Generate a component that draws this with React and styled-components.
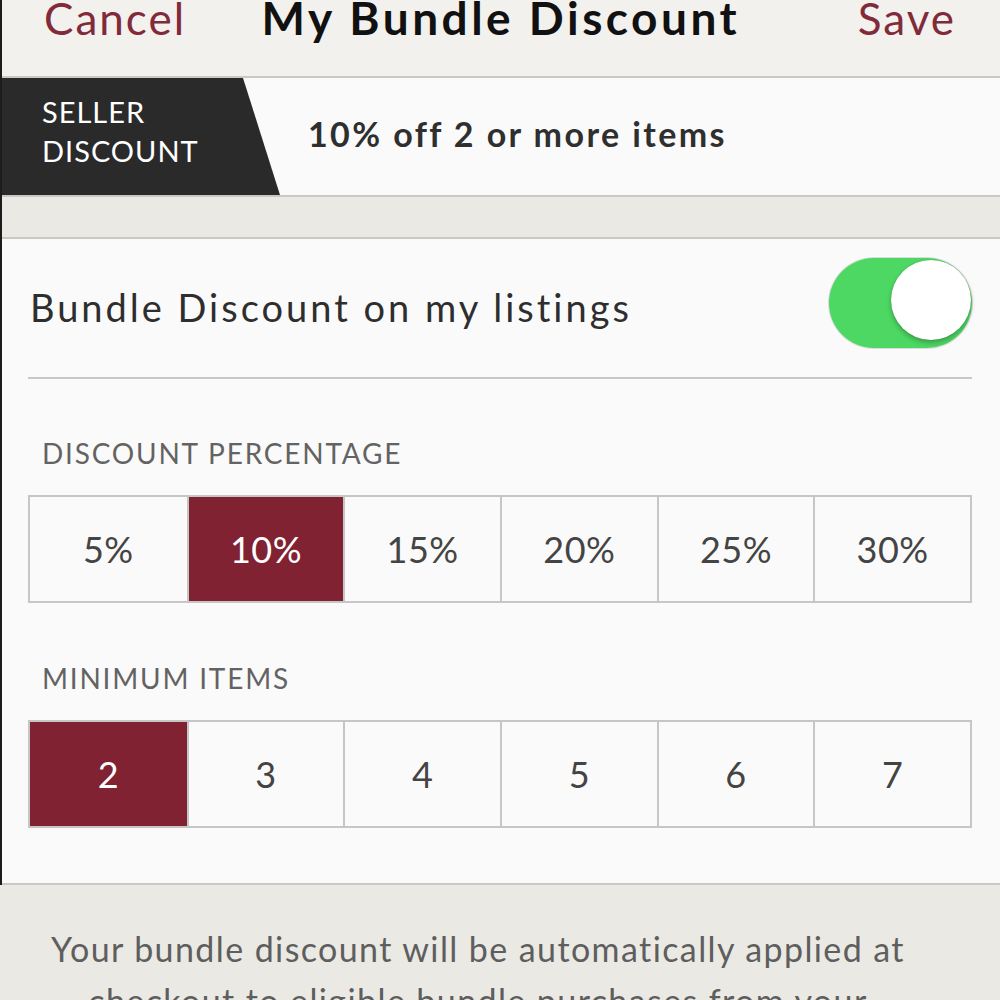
import styled, { createGlobalStyle } from 'styled-components';

const GlobalStyle = createGlobalStyle`
  html, body {
    margin: 0;
    padding: 0;
    background: #ebe9e4;
  }
  body {
    font-family: Lato, 'Noto Sans', sans-serif;
    color: #333;
    overflow: hidden;
  }
`;

const percentOptions = [5, 10, 15, 20, 25, 30];
const itemOptions = [2, 3, 4, 5, 6, 7];

const Screen = styled.div`
  width: 1000px;
  height: 1000px;
  overflow: hidden;
  display: flex;
  flex-direction: column;
  background: #ebe9e4;
`;

const Framed = styled.div`
  border-left: 2px solid #1c1c1c;
  display: flex;
  flex-direction: column;
`;

const NavBar = styled.div`
  height: 76px;
  background: #f2f1ed;
  border-bottom: 2px solid #c9c8c4;
  display: flex;
  align-items: flex-start;
  justify-content: space-between;
  padding: 0 44px 0 42px;
`;

const NavLink = styled.div`
  color: #812a3a;
  font-size: 44px;
  line-height: 44px;
  letter-spacing: 2px;
  margin-top: -4px;
`;

const NavTitle = styled.div`
  color: #111;
  font-size: 46px;
  font-weight: 700;
  line-height: 44px;
  letter-spacing: 3.5px;
  margin-top: -4px;
  margin-right: 42px;
`;

const SellerBand = styled.div`
  height: 117px;
  background: #fbfafa;
  border-bottom: 2px solid #c9c8c4;
  display: flex;
  align-items: center;
`;

const SellerTag = styled.div`
  align-self: stretch;
  width: 278px;
  background: #2a2a2a;
  clip-path: polygon(0 0, 241px 0, 100% 100%, 0 100%);
  color: #fff;
  font-size: 29px;
  line-height: 39px;
  letter-spacing: 1px;
  padding: 14px 0 0 40px;
  box-sizing: border-box;
  text-transform: uppercase;
`;

const SellerSummary = styled.div`
  margin-left: 28px;
  font-size: 34px;
  font-weight: 700;
  letter-spacing: 2.4px;
  color: #2f2f2f;
  margin-top: -6px;
`;

const Spacer = styled.div`
  height: 40px;
  background: #ebe9e4;
  border-bottom: 2px solid #cbc9c5;
`;

const Settings = styled.div`
  background: #fbfafa;
  padding: 0 28px 0 26px;
  border-bottom: 2px solid #c9c8c4;
  height: 646px;
  box-sizing: border-box;
`;

const ToggleRow = styled.div`
  height: 140px;
  border-bottom: 2px solid #c8c8c8;
  display: flex;
  align-items: center;
  justify-content: space-between;
  box-sizing: border-box;
`;

const ToggleLabel = styled.div`
  font-size: 38px;
  letter-spacing: 3px;
  color: #2e2e2e;
  margin-left: 2px;
  margin-top: -3px;
`;

const Switch = styled.div`
  position: relative;
  width: 143px;
  height: 90px;
  border-radius: 45px;
  background: #4cd863;
  box-shadow: 0 0 0 1px #dcdcdc;
  margin-top: -10px;
`;

const Knob = styled.div`
  position: absolute;
  right: 1px;
  top: 2px;
  width: 80px;
  height: 80px;
  border-radius: 50%;
  background: #fff;
  box-shadow: 0 3px 5px rgba(0, 0, 0, 0.25), 0 0 1px rgba(0, 0, 0, 0.3);
`;

const GroupLabel = styled.div`
  font-size: 28px;
  color: #636363;
  letter-spacing: 1.8px;
  text-transform: uppercase;
  padding-left: 14px;
  margin-top: ${({ $top }) => $top}px;
  line-height: 34px;
`;

const Segments = styled.div`
  display: grid;
  grid-template-columns: repeat(6, 1fr);
  margin-top: 25px;
  border: 2px solid #c6c6c6;
  height: 108px;
  box-sizing: border-box;
`;

const Segment = styled.div`
  display: flex;
  align-items: center;
  justify-content: center;
  font-size: 36px;
  letter-spacing: 0.5px;
  color: ${({ $active }) => ($active ? '#fff' : '#444')};
  background: ${({ $active }) => ($active ? '#812233' : 'transparent')};
  & + & {
    border-left: 2px solid #c6c6c6;
  }
`;

const Footer = styled.div`
  padding: 38px 92px 0 48px;
  text-align: center;
  font-size: 34px;
  line-height: 52px;
  letter-spacing: 1.4px;
  color: #5e5e5e;
`;

const SegmentGroup = ({ options, selected, suffix }) => (
  <Segments>
    {options.map((value) => (
      <Segment key={value} $active={value === selected}>
        {value}
        {suffix}
      </Segment>
    ))}
  </Segments>
);

const App = () => {
  return (
    <>
      <GlobalStyle />
      <Screen>
        <Framed>
          <NavBar>
            <NavLink>Cancel</NavLink>
            <NavTitle>My Bundle Discount</NavTitle>
            <NavLink>Save</NavLink>
          </NavBar>
          <SellerBand>
            <SellerTag>
              Seller
              <br />
              Discount
            </SellerTag>
            <SellerSummary>10% off 2 or more items</SellerSummary>
          </SellerBand>
          <Spacer />
          <Settings>
            <ToggleRow>
              <ToggleLabel>Bundle Discount on my listings</ToggleLabel>
              <Switch>
                <Knob />
              </Switch>
            </ToggleRow>
            <GroupLabel $top={57}>Discount Percentage</GroupLabel>
            <SegmentGroup options={percentOptions} selected={10} suffix="%" />
            <GroupLabel $top={58}>Minimum Items</GroupLabel>
            <SegmentGroup options={itemOptions} selected={2} suffix="" />
          </Settings>
        </Framed>
        <Footer>
          Your bundle discount will be automatically applied at checkout to
          eligible bundle purchases from your closet.
        </Footer>
      </Screen>
    </>
  );
};

export default App;
